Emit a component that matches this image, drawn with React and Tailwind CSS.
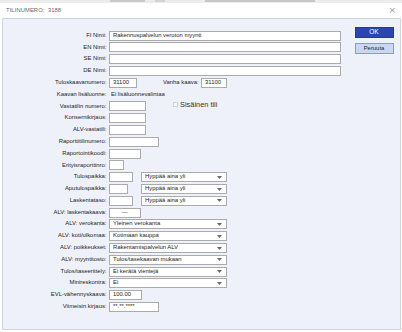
import React from "react";

const Arrow = () => (
  <svg width="5" height="3" viewBox="0 0 5 3" className="shrink-0">
    <path d="M0 0 H5 L2.5 3 Z" fill="#6b6b6b" />
  </svg>
);

const Input = ({ w, value, center }) => (
  <div
    className={`h-[10px] border border-[#ababab] bg-white flex items-center shrink-0 leading-none ${center ? "justify-center" : "pl-[3px]"}`}
    style={{ width: w }}
  >
    {value}
  </div>
);

const Select = ({ w, value }) => (
  <div
    className="h-[10px] border border-[#ababab] bg-white flex items-center justify-between pl-[3px] pr-[4px] shrink-0 leading-none"
    style={{ width: w }}
  >
    <span>{value}</span>
    <Arrow />
  </div>
);

const Row = ({ label, children }) => (
  <div className="h-[11.8px] flex items-center">
    <div className="w-[103.5px] text-right shrink-0 leading-none">{label}</div>
    <div className="ml-[2.5px] flex items-center">{children}</div>
  </div>
);

export default function App() {
  return (
    <div className="w-[402px] h-[332px] bg-white overflow-hidden flex flex-col text-[5.9px] text-[#1e1e1e] font-['Liberation_Sans',Arial,sans-serif]">
      <div className="h-[3px] bg-[#ececec] flex items-start gap-[10px] pl-[110px] shrink-0">
        <div className="h-[1.5px] w-[35px] bg-[#c9c9c9]" />
        <div className="h-[1.5px] w-[10px] bg-[#d4d4d4]" />
        <div className="h-[1.5px] w-[110px] bg-[#c6c6c6] ml-[30px]" />
      </div>
      <div className="h-[14.5px] flex items-center justify-between pl-[6px] pr-[6px] shrink-0">
        <span className="text-[5.8px] text-[#6a6a6a] tracking-[0.1px]">TILINUMERO:&nbsp; 3188</span>
        <span className="text-[9px] text-[#9a9a9a] font-['DejaVu_Sans',sans-serif] leading-none">×</span>
      </div>
      <div className="ml-[2px] mr-[1.5px] h-[312.5px] border border-[#cfd3da] bg-[#eef1f9] flex justify-between shrink-0">
        <div className="pt-[11.3px] flex flex-col">
          <Row label="FI Nimi:">
            <Input w={231.5} value="Rakennuspalvelun veroton myynti" />
          </Row>
          <Row label="EN Nimi:">
            <Input w={231.5} />
          </Row>
          <Row label="SE Nimi:">
            <Input w={231.5} />
          </Row>
          <Row label="DE Nimi:">
            <Input w={231.5} />
          </Row>
          <Row label="Tuloskaavanumero:">
            <Input w={28} value="31100" />
            <span className="ml-[26px] leading-none">Vanha kaava:</span>
            <div className="ml-[2.5px]">
              <Input w={26} value="31100" />
            </div>
          </Row>
          <Row label="Kaavan lisäluonne:">
            <span className="pl-[2px] leading-none">Ei lisäluonnevalintaa</span>
          </Row>
          <Row label="Vastatilin numero:">
            <Input w={36.5} />
            <div className="ml-[27px] mb-[3px] flex items-center">
              <div className="w-[5px] h-[5px] border border-[#d2d2d2] bg-[#f7f7f7]" />
              <span className="ml-[2.5px] text-[7.4px] text-[#333] leading-none">Sisäinen tili</span>
            </div>
          </Row>
          <Row label="Konsernikirjaus:">
            <Input w={36.5} />
          </Row>
          <Row label="ALV-vastatili:">
            <Input w={36.5} />
          </Row>
          <Row label="Raporttitilinumero:">
            <Input w={49.5} />
          </Row>
          <Row label="Raportointikoodi:">
            <Input w={32} />
          </Row>
          <Row label="Erityisraporttinro:">
            <Input w={14.5} />
          </Row>
          <Row label="Tulospaikka:">
            <Input w={23.5} />
            <div className="ml-[8.5px]">
              <Select w={86} value="Hyppää aina yli" />
            </div>
          </Row>
          <Row label="Aputulospaikka:">
            <Input w={19} />
            <div className="ml-[13px]">
              <Select w={86} value="Hyppää aina yli" />
            </div>
          </Row>
          <Row label="Laskentataso:">
            <Input w={23.5} />
            <div className="ml-[8.5px]">
              <Select w={86} value="Hyppää aina yli" />
            </div>
          </Row>
          <Row label="ALV: laskentakaava:">
            <Input w={31.5} value="—" center />
          </Row>
          <Row label="ALV: verokanta:">
            <Select w={118} value="Yleinen verokanta" />
          </Row>
          <Row label="ALV: koti/ulkomaa:">
            <Select w={118} value="Kotimaan kauppa" />
          </Row>
          <Row label="ALV: poikkeukset:">
            <Select w={118} value="Rakentamispalvelun ALV" />
          </Row>
          <Row label="ALV: myyntitosto:">
            <Select w={118} value="Tulos/tasekaavan mukaan" />
          </Row>
          <Row label="Tulos/taseerittely:">
            <Select w={118} value="Ei kerätä vientejä" />
          </Row>
          <Row label="Minireskontra:">
            <Select w={118} value="Ei" />
          </Row>
          <Row label="EVL-vähennyskaava:">
            <Input w={32.5} value="100.00" />
          </Row>
          <Row label="Viimeisin kirjaus:">
            <Input w={50} value="**.**.****" />
          </Row>
        </div>
        <div className="pt-[8px] pr-[6px] flex flex-col gap-[5.5px]">
          <div className="w-[39px] h-[11px] bg-[#2b46b3] border border-[#24399a] text-white text-[6.5px] flex items-center justify-center leading-none">
            OK
          </div>
          <div className="w-[39px] h-[11px] bg-[#cbd6f2] border border-[#8a9bd0] text-[#1e1e1e] text-[5.9px] flex items-center justify-center leading-none">
            Peruuta
          </div>
        </div>
      </div>
    </div>
  );
}
